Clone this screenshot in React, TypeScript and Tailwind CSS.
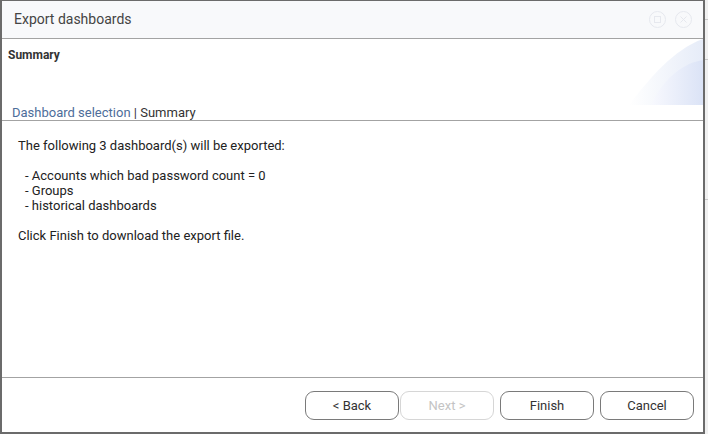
import React from "react";

const font = { fontFamily: "Roboto, 'Liberation Sans', Arial, sans-serif" };

function Btn({ label, disabled }: { label: string; disabled?: boolean }) {
  return (
    <button
      disabled={disabled}
      className={
        disabled
          ? "w-[94px] h-[29px] rounded-[9px] border border-[#d6d6d6] bg-white text-[13px] text-[#c4c4c4]"
          : "w-[94px] h-[29px] rounded-[9px] border border-[#7a7a7a] bg-white text-[13px] text-[#333]"
      }
    >
      {label}
    </button>
  );
}

export default function App() {
  return (
    <div className="w-[708px] h-[434px] flex bg-[#ebebeb] overflow-hidden" style={font}>
      <div className="w-[705px] h-[434px] flex flex-col bg-white border-t border-l-2 border-r-2 border-b-2 border-[#6b6b6b] shrink-0">
        <div className="h-[38px] shrink-0 bg-[#f8f9fb] border-b border-[#a3a3a3] flex items-center pl-[12px] pr-[11px]">
          <span className="text-[14px] text-[#444] flex-1">Export dashboards</span>
          <div className="flex items-center gap-[9px]">
            <svg width="17" height="17" viewBox="0 0 17 17">
              <circle cx="8.5" cy="8.5" r="8" fill="none" stroke="#e6e8ee" strokeWidth="1" />
              <rect x="5.5" y="5.5" width="6" height="6" fill="none" stroke="#e6e8ee" strokeWidth="1" />
            </svg>
            <svg width="17" height="17" viewBox="0 0 17 17">
              <circle cx="8.5" cy="8.5" r="8" fill="none" stroke="#e6e8ee" strokeWidth="1" />
              <path d="M5.5 5.5 L11.5 11.5 M11.5 5.5 L5.5 11.5" stroke="#e6e8ee" strokeWidth="1" />
            </svg>
          </div>
        </div>
        <div className="h-[82px] shrink-0 relative border-b border-[#a3a3a3] flex flex-col justify-between pl-[6px] pt-[7px]">
          <div className="text-[12px] font-bold text-[#333]">Summary</div>
          <div className="text-[13px] leading-[15px] pl-[4px]">
            <span className="text-[#4d6d9a]">Dashboard selection</span>
            <span className="text-[#333]"> | Summary</span>
          </div>
          <svg className="absolute right-0 top-0" width="74" height="66" viewBox="0 0 74 66">
            <defs>
              <linearGradient id="g1" x1="0" y1="0" x2="1" y2="0">
                <stop offset="0" stopColor="#ffffff" />
                <stop offset="1" stopColor="#e6ecf8" />
              </linearGradient>
              <linearGradient id="g2" x1="0" y1="0" x2="1" y2="0">
                <stop offset="0" stopColor="#f8f9fe" />
                <stop offset="1" stopColor="#dbe3f6" />
              </linearGradient>
            </defs>
            <path d="M0 66 C20 40 45 10 74 0 L74 66 Z" fill="url(#g1)" />
            <path d="M22 66 C35 38 55 24 74 21 L74 66 Z" fill="url(#g2)" />
          </svg>
        </div>
        <div className="flex-1 pt-[17px] pl-[16px] text-[13px] leading-[15px] text-[#222]">
          <div>The following 3 dashboard(s) will be exported:</div>
          <div className="h-[15px]" />
          <div className="pl-[7px]">- Accounts which bad password count = 0</div>
          <div className="pl-[7px]">- Groups</div>
          <div className="pl-[7px]">- historical dashboards</div>
          <div className="h-[15px]" />
          <div>Click Finish to download the export file.</div>
        </div>
        <div className="h-[55px] shrink-0 border-t border-[#a3a3a3] flex justify-end items-start pt-[13px] pr-[9px]">
          <div className="flex">
            <Btn label="< Back" />
            <div className="ml-[1px]">
              <Btn label="Next >" disabled />
            </div>
          </div>
          <div className="ml-[6px]">
            <Btn label="Finish" />
          </div>
          <div className="ml-[6px]">
            <Btn label="Cancel" />
          </div>
        </div>
      </div>
      <div className="flex-1 flex flex-col bg-[#f0f0f0]">
        <div className="h-[20px] border-b border-[#c8c8c8]" />
        <div className="h-[40px] border-b border-[#c8c8c8]" />
        <div className="h-[140px] border-b border-[#c8c8c8]" />
      </div>
    </div>
  );
}
